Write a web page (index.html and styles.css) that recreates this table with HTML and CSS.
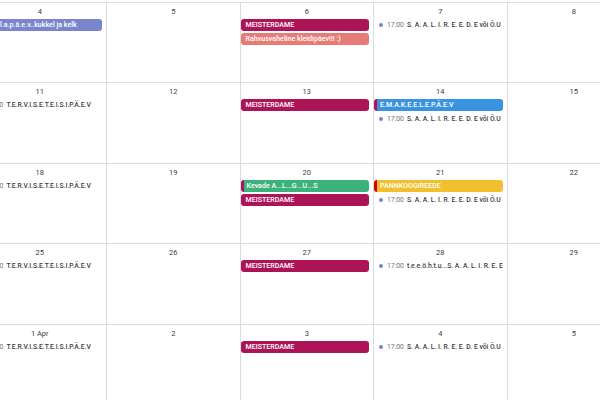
FILE: index.html
```html
<!DOCTYPE html>
<html>
<head>
<meta charset="utf-8">
<link rel="stylesheet" href="styles.css">
</head>
<body>
<div class="month">
  <!-- week 1 -->
  <div class="cell"><div class="date">4</div><div class="events"><div class="bar lavender">V.a.s.t.l.a.p.ä.e.v..kukkel ja kelk</div></div></div>
  <div class="cell"><div class="date">5</div><div class="events"></div></div>
  <div class="cell"><div class="date">6</div><div class="events"><div class="bar beet">MEISTERDAME</div><div class="bar flamingo">Rahvusvaheline kleidipäev!!! :)</div></div></div>
  <div class="cell"><div class="date">7</div><div class="events"><div class="timed"><span class="dot"></span><span class="time">17:00</span><span class="title">S. A. A. L. I. R. E. E. D. E või Õ.U</span></div></div></div>
  <div class="cell"><div class="date">8</div><div class="events"></div></div>
  <!-- week 2 -->
  <div class="cell"><div class="date">11</div><div class="events"><div class="timed"><span class="dot"></span><span class="time">17:00</span><span class="title">T.E.R.V.I.S.E.T.E.I.S.I.P.Ä.E.V</span></div></div></div>
  <div class="cell"><div class="date">12</div><div class="events"></div></div>
  <div class="cell"><div class="date">13</div><div class="events"><div class="bar beet">MEISTERDAME</div></div></div>
  <div class="cell"><div class="date">14</div><div class="events"><div class="bar peacock stripe-beet">E.M.A.K.E.E.L.E.P.Ä.E.V</div><div class="timed"><span class="dot"></span><span class="time">17:00</span><span class="title">S. A. A. L. I. R. E. E. D. E või Õ.U</span></div></div></div>
  <div class="cell"><div class="date">15</div><div class="events"></div></div>
  <!-- week 3 -->
  <div class="cell"><div class="date">18</div><div class="events"><div class="timed"><span class="dot"></span><span class="time">17:00</span><span class="title">T.E.R.V.I.S.E.T.E.I.S.I.P.Ä.E.V</span></div></div></div>
  <div class="cell"><div class="date">19</div><div class="events"></div></div>
  <div class="cell"><div class="date">20</div><div class="events"><div class="bar sage stripe-beet">Kevade A...L...G...U...S</div><div class="bar beet">MEISTERDAME</div></div></div>
  <div class="cell"><div class="date">21</div><div class="events"><div class="bar banana stripe-tomato">PANNKOOGIREEDE</div><div class="timed"><span class="dot"></span><span class="time">17:00</span><span class="title">S. A. A. L. I. R. E. E. D. E või Õ.U</span></div></div></div>
  <div class="cell"><div class="date">22</div><div class="events"></div></div>
  <!-- week 4 -->
  <div class="cell"><div class="date">25</div><div class="events"><div class="timed"><span class="dot"></span><span class="time">17:00</span><span class="title">T.E.R.V.I.S.E.T.E.I.S.I.P.Ä.E.V</span></div></div></div>
  <div class="cell"><div class="date">26</div><div class="events"></div></div>
  <div class="cell"><div class="date">27</div><div class="events"><div class="bar beet">MEISTERDAME</div></div></div>
  <div class="cell"><div class="date">28</div><div class="events"><div class="timed"><span class="dot"></span><span class="time">17:00</span><span class="title">t.e.e.ö.h.t.u...S. A. A. L. I. R. E. E. D. E või Õ.U</span></div></div></div>
  <div class="cell"><div class="date">29</div><div class="events"></div></div>
  <!-- week 5 -->
  <div class="cell"><div class="date">1 Apr</div><div class="events"><div class="timed"><span class="dot"></span><span class="time">17:00</span><span class="title">T.E.R.V.I.S.E.T.E.I.S.I.P.Ä.E.V</span></div></div></div>
  <div class="cell"><div class="date">2</div><div class="events"></div></div>
  <div class="cell"><div class="date">3</div><div class="events"><div class="bar beet">MEISTERDAME</div></div></div>
  <div class="cell"><div class="date">4</div><div class="events"><div class="timed"><span class="dot"></span><span class="time">17:00</span><span class="title">S. A. A. L. I. R. E. E. D. E või Õ.U</span></div></div></div>
  <div class="cell"><div class="date">5</div><div class="events"></div></div>
</div>
</body>
</html>
```

FILE: styles.css
```css
html, body {
  margin: 0;
  padding: 0;
  background: #ffffff;
  overflow: hidden;
  width: 600px;
  height: 400px;
}

.month {
  display: grid;
  grid-template-columns: repeat(5, 133.5px);
  grid-auto-rows: 80.4px;
  margin-left: -27.5px;
  margin-top: 2px;
  font-family: Roboto, "Liberation Sans", sans-serif;
}

.cell {
  box-sizing: border-box;
  border-top: 1px solid #dadce0;
  border-left: 1px solid #dadce0;
  padding-top: 4px;
  min-width: 0;
  overflow: hidden;
  display: flex;
  flex-direction: column;
}

.date {
  height: 9px;
  line-height: 9px;
  font-size: 7.5px;
  font-weight: 400;
  color: #3c4043;
  text-align: center;
  margin-bottom: 3px;
}

.events {
  display: flex;
  flex-direction: column;
  gap: 2px;
  padding-right: 4px;
  min-width: 0;
}

.bar {
  box-sizing: border-box;
  height: 12px;
  line-height: 12px;
  border-radius: 3px;
  padding-left: 5px;
  color: #ffffff;
  font-size: 7.1px;
  font-weight: 500;
  white-space: nowrap;
  overflow: hidden;
}

.beet { background: #ad1457; }
.flamingo { background: #e67c73; }
.lavender { background: #7986cb; }
.peacock { background: #3a93e0; }
.sage { background: #3bb27a; }
.banana { background: #f2c02e; }

.stripe-beet { border-left: 3px solid #ad1457; padding-left: 3px; }
.stripe-tomato { border-left: 3px solid #d50000; padding-left: 3px; }

.timed {
  display: flex;
  align-items: center;
  height: 12px;
  padding-left: 5px;
  white-space: nowrap;
  overflow: hidden;
  font-size: 6.8px;
}

.dot {
  flex: none;
  width: 4px;
  height: 4px;
  border-radius: 50%;
  background: #7986cb;
  margin-right: 4px;
}

.time {
  flex: none;
  color: #70757a;
  margin-right: 3px;
}

.title {
  color: #3c4043;
  font-weight: 500;
}
```
